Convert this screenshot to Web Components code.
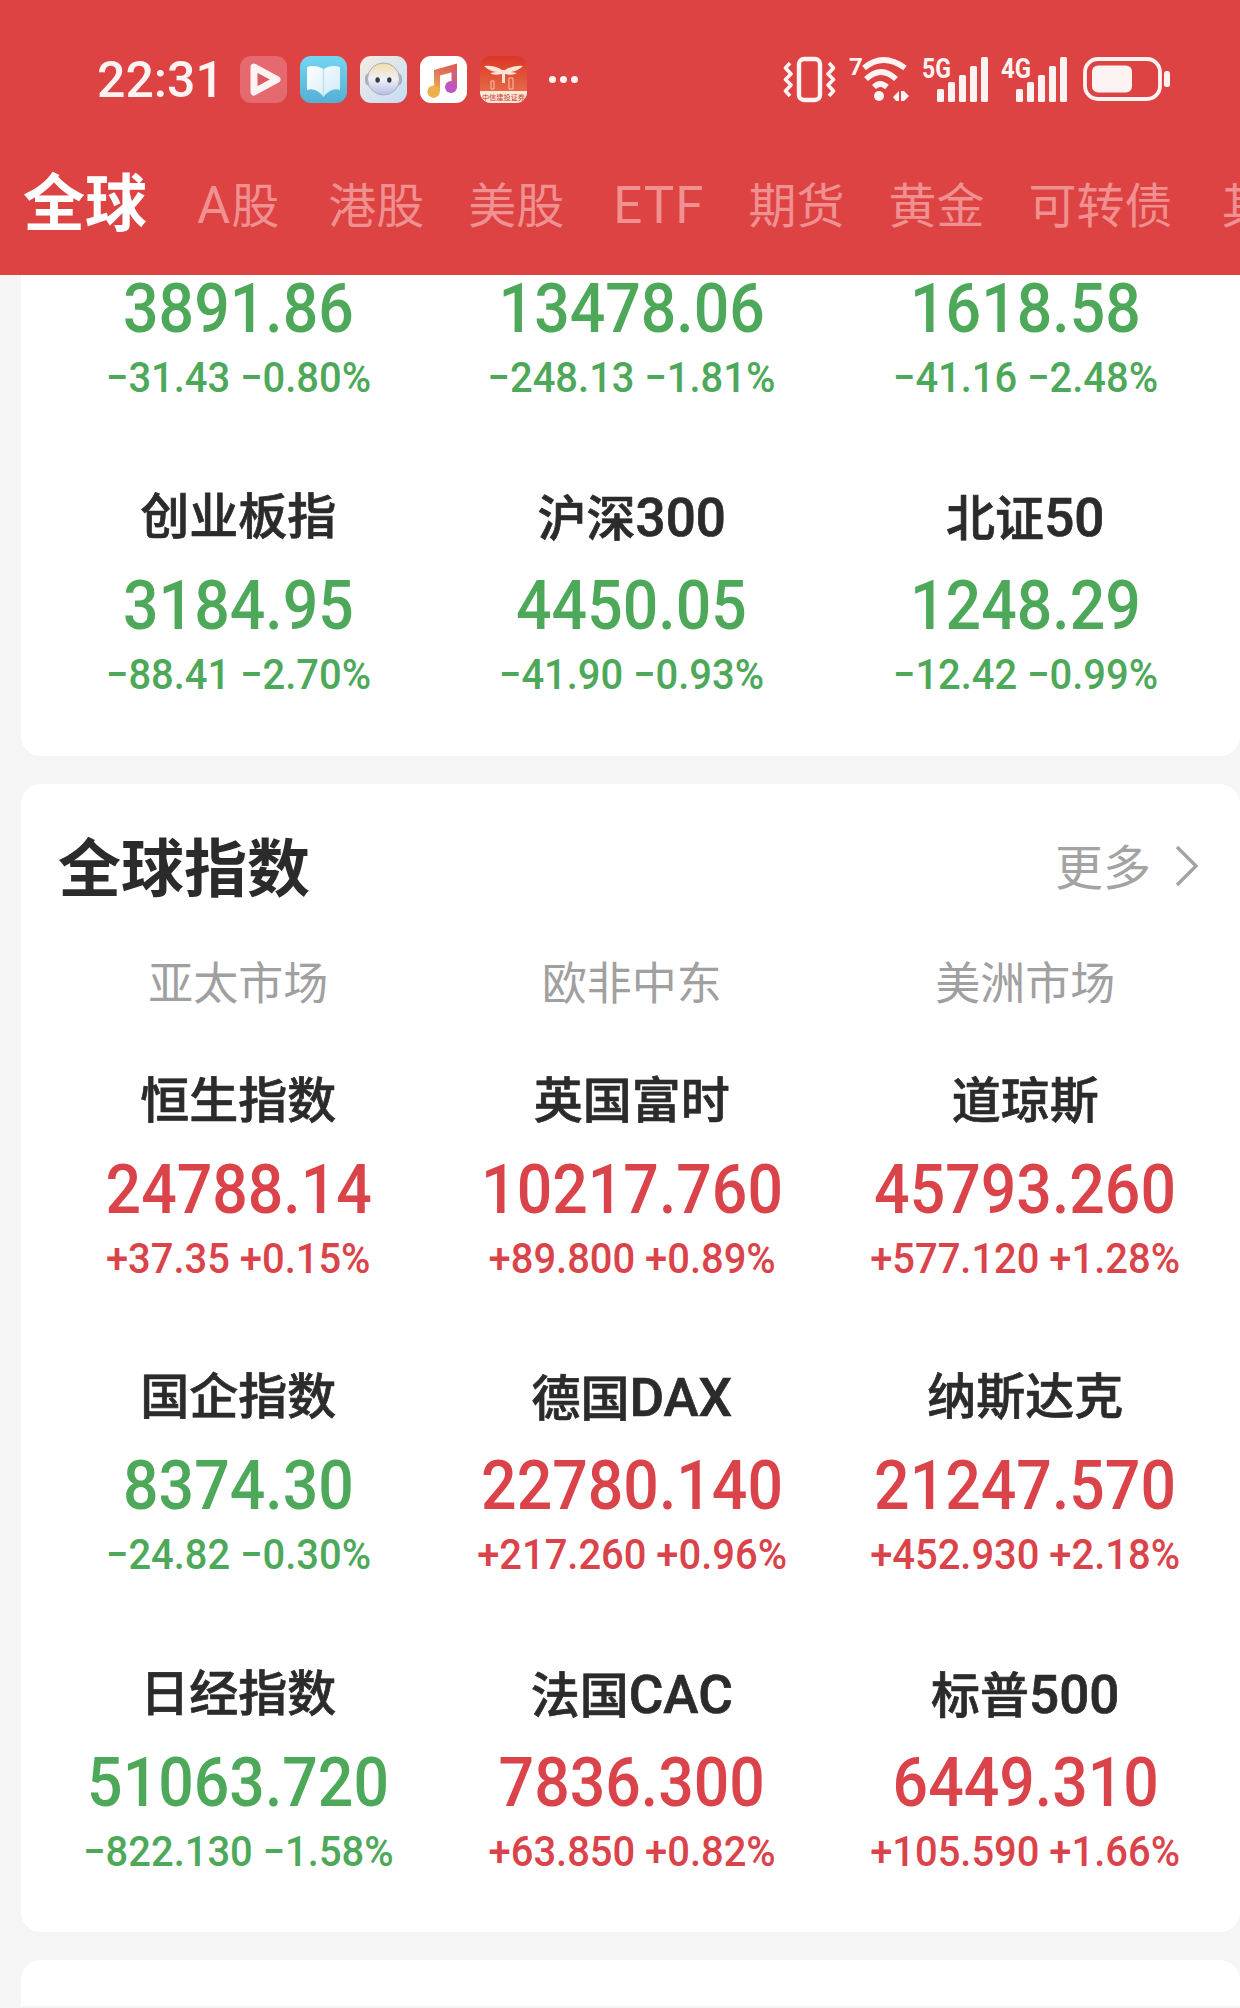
<!DOCTYPE html>
<html lang="zh">
<head>
<meta charset="utf-8">
<style>
  html, body { margin: 0; height: 100%; overflow: hidden; background: #f5f5f5; }
  body { display: flex; flex-direction: column; font-family: Roboto, "Noto Sans CJK SC", sans-serif; }
  .scroller { flex: 1; min-height: 0; display: flex; flex-direction: column; gap: 28px; padding-left: 21px; }
</style>
</head>
<body>
<app-header></app-header>
<div class="scroller">
  <index-card id="domestic" class="first"></index-card>
  <index-card id="global" heading="全球指数" more="更多" labels="亚太市场,欧非中东,美洲市场"></index-card>
  <index-card id="next" class="stub"></index-card>
</div>

<script>
/**
 * Red header: status bar + market tabs
 */
class StatusBar extends HTMLElement {
  constructor() {
    super();
    this.attachShadow({ mode: 'open' });
  }

  connectedCallback() {
    this.shadowRoot.innerHTML = `
      <style>
        :host { display: flex; align-items: center; height: 158px; padding-left: 97px; color: #fdf3f3; box-sizing: border-box; }
        .time { width: 143px; font: 500 50px Roboto, sans-serif; margin-top: 2px; }
        .apps { display: flex; align-items: center; gap: 13px; }
        .apps svg { display: block; width: 47px; height: 47px; }
        .dots { display: flex; gap: 4px; margin-left: 22px; }
        .dots i { width: 7px; height: 7px; border-radius: 50%; background: #fdf3f3; }
        .sys { display: block; position: absolute; left: 783px; top: 44px; width: 390px; height: 60px; }
        .sys text { font: 700 28px Roboto, sans-serif; fill: #fdf3f3; }
      </style>
      <div class="time">22:31</div>
      <div class="apps">
        <svg viewBox="0 0 47 47">
          <rect width="47" height="47" rx="11" fill="#e5696f"/>
          <path d="M14 11 L37 23.5 L14 36 Z" fill="#db5a63" stroke="#fdf3f3" stroke-width="7" stroke-linejoin="round"/>
        </svg>
        <svg viewBox="0 0 47 47">
          <defs>
            <linearGradient id="bk" x1="0" y1="0" x2="0" y2="1"><stop offset="0" stop-color="#74d6f2"/><stop offset="1" stop-color="#54b0d4"/></linearGradient>
            <linearGradient id="pg" x1="0" y1="0" x2="1" y2="1"><stop offset="0" stop-color="#ffffff"/><stop offset="1" stop-color="#cfeaf7"/></linearGradient>
          </defs>
          <rect width="47" height="47" rx="11" fill="url(#bk)"/>
          <path d="M7 11 Q16 8 23.5 13 Q31 8 40 11 V34 Q31 31 23.5 41 Q16 31 7 34 Z" fill="url(#pg)"/>
          <path d="M23.5 13 V40" stroke="#b9e2f3" stroke-width="1.5"/>
        </svg>
        <svg viewBox="0 0 47 47">
          <defs>
            <linearGradient id="rb" x1="0" y1="0" x2="1" y2="1"><stop offset="0" stop-color="#f5ece3"/><stop offset="1" stop-color="#c4dcf7"/></linearGradient>
            <linearGradient id="hd" x1="0" y1="0" x2="0" y2="1"><stop offset="0" stop-color="#f3dca6"/><stop offset=".5" stop-color="#eef1f8"/><stop offset="1" stop-color="#b8bce6"/></linearGradient>
          </defs>
          <rect width="47" height="47" rx="11" fill="url(#rb)"/>
          <rect x="5" y="17" width="37" height="13" rx="5" fill="#a9aeb8"/>
          <circle cx="23.5" cy="23" r="16" fill="url(#hd)" stroke="#a9aeb8" stroke-width="1"/>
          <ellipse cx="17.6" cy="24" rx="2.2" ry="2.8" fill="#333a4a"/>
          <ellipse cx="29.3" cy="24" rx="2.2" ry="2.8" fill="#333a4a"/>
        </svg>
        <svg viewBox="0 0 47 47">
          <defs>
            <linearGradient id="nt" x1=".6" y1="0" x2=".2" y2="1"><stop offset="0" stop-color="#df5f52"/><stop offset=".45" stop-color="#e2785a"/><stop offset="1" stop-color="#eeb04e"/></linearGradient>
          </defs>
          <rect width="47" height="47" rx="11" fill="#fff"/>
          <path d="M14 14 L37 7.5 V15 L20 19.5 V36 H14 Z" fill="url(#nt)"/>
          <circle cx="13.6" cy="35.7" r="6.2" fill="#eeb04e"/>
          <path d="M31.5 14 H37 V31 H31.5 Z" fill="#d0607f"/>
          <circle cx="31" cy="31" r="6" fill="#bf55bd"/>
        </svg>
        <svg viewBox="0 0 47 47">
          <defs>
            <linearGradient id="cx" x1="0" y1="0" x2="0" y2="1"><stop offset="0" stop-color="#dc3527"/><stop offset="1" stop-color="#ea7a52"/></linearGradient>
            <clipPath id="cr"><rect width="47" height="47" rx="11"/></clipPath>
          </defs>
          <g clip-path="url(#cr)">
            <rect width="47" height="47" fill="url(#cx)"/>
            <path d="M4 10 Q14 9 22 14 L22 18 Q14 20 10 17 L16 16 Q9 15 4 10 Z M43 10 Q33 9 25 14 L25 18 Q33 20 37 17 L31 16 Q38 15 43 10 Z" fill="#fbe4d6"/>
            <path d="M22 14 H25 V27 H22 Z" fill="#fbe4d6"/>
            <path d="M11 25 h3 v8 h-3z M29 22 h4 v11 h-4z" fill="none" stroke="#f7c5a8" stroke-width="1"/>
            <rect x="0" y="35" width="47" height="12" fill="#fbe9d8"/>
            <text x="23.5" y="44" text-anchor="middle" font-size="7.2" fill="#c9392a" font-family="'Noto Sans CJK SC', sans-serif">中信建投证券</text>
          </g>
        </svg>
      </div>
      <div class="dots"><i></i><i></i><i></i></div>
      <svg class="sys" viewBox="0 -10 390 60" fill="none">
        <!-- vibrate -->
        <rect x="16" y="5" width="21" height="41" rx="5" stroke="#fdf3f3" stroke-width="4.4"/>
        <path d="M7 9 L2.5 14 L8 20 L2.5 25.5 L8 31 L2.5 37 L7 42 M46 9 L50.5 14 L45 20 L50.5 25.5 L45 31 L50.5 37 L46 42" stroke="#fdf3f3" stroke-width="3.6" stroke-linejoin="round"/>
        <!-- wifi 7 -->
        <text x="66" y="21" style="font-size:24px">7</text>
        <path d="M81 14 Q100 -2 122 14 M83 25 Q98 11 113 25 M91 33 Q97 27 104 33" stroke="#fdf3f3" stroke-width="5.6"/>
        <circle cx="96" cy="42" r="5" fill="#fdf3f3"/>
        <path d="M113 47 h3 v-10 l-6 6z M118 37 h3 l5 5 -5 5 h-3z" fill="#fdf3f3"/>
        <!-- 5G -->
        <text x="139" y="24" textLength="29" lengthAdjust="spacingAndGlyphs">5G</text>
        <g fill="#fdf3f3">
          <rect x="154" y="35" width="7" height="13" rx="1.5"/>
          <rect x="165" y="28" width="7" height="20" rx="1.5"/>
          <rect x="176" y="21" width="7" height="27" rx="1.5"/>
          <rect x="187" y="12" width="7" height="36" rx="1.5"/>
          <rect x="198" y="3" width="7" height="45" rx="1.5"/>
        </g>
        <!-- 4G -->
        <text x="218" y="24" textLength="30" lengthAdjust="spacingAndGlyphs">4G</text>
        <g fill="#fdf3f3">
          <rect x="233" y="35" width="7" height="13" rx="1.5"/>
          <rect x="244" y="28" width="7" height="20" rx="1.5"/>
          <rect x="255" y="21" width="7" height="27" rx="1.5"/>
          <rect x="266" y="12" width="7" height="36" rx="1.5"/>
          <rect x="277" y="3" width="7" height="45" rx="1.5"/>
        </g>
        <!-- battery -->
        <rect x="302" y="5" width="75" height="40" rx="13" stroke="#fdf3f3" stroke-width="3.8"/>
        <rect x="309" y="11.5" width="40" height="27" rx="6" fill="#fdf3f3"/>
        <rect x="381" y="17" width="6" height="16" rx="2.5" fill="#fdf3f3"/>
      </svg>
    `;
  }
}

class TabStrip extends HTMLElement {
  constructor() {
    super();
    this.attachShadow({ mode: 'open' });
  }

  connectedCallback() {
    const tabs = (this.getAttribute('tabs') || '').split(',');
    const wide = (this.getAttribute('wide') || '').split(',');
    // latin letters run wider than the CJK ones in the app font
    const mark = t => t.replace(/[A-Za-z]+/g, m => `<span class="lat">${m}</span>`);
    this.shadowRoot.innerHTML = `
      <style>
        :host { display: flex; align-items: center; height: 117px; padding: 0 0 20px 23px; box-sizing: border-box; overflow: hidden; white-space: nowrap; font-family: Roboto, "Noto Sans CJK SC", sans-serif; }
        .tab { flex: none; font-size: 48px; color: #f09090; margin-right: 44px; line-height: 60px; }
        .tab.on { font-size: 62px; font-weight: 700; color: #fff; margin-right: 50px; margin-top: -4px; }
        .tab.wide { margin-right: 49px; }
        .lat { font-size: 51px; letter-spacing: 1px; }
      </style>
      ${tabs.map((t, i) => `<span class="tab ${i === 0 ? 'on' : ''} ${wide.includes(t) ? 'wide' : ''}">${mark(t)}</span>`).join('')}
    `;
  }
}

class AppHeader extends HTMLElement {
  constructor() {
    super();
    this.attachShadow({ mode: 'open' });
  }

  connectedCallback() {
    this.shadowRoot.innerHTML = `
      <style>
        :host { display: block; flex: none; height: 275px; background: #dd4342; position: relative; z-index: 1; }
      </style>
      <status-bar></status-bar>
      <tab-strip tabs="全球,A股,港股,美股,ETF,期货,黄金,可转债,其他" wide="A股,美股,可转债"></tab-strip>
    `;
  }
}

/**
 * One quote: name, big value, change line
 */
class QuoteCell extends HTMLElement {
  constructor() {
    super();
    this.attachShadow({ mode: 'open' });
  }

  connectedCallback() {
    const name = this.getAttribute('name');
    const up = (this.getAttribute('change') || '').startsWith('+');
    const label = name ? name.replace(/[A-Za-z0-9]+/g, m => `<span class="lat">${m}</span>`) : '';
    this.shadowRoot.innerHTML = `
      <style>
        :host { display: flex; flex-direction: column; align-items: center; white-space: nowrap; }
        .name { height: 60px; line-height: 60px; margin-bottom: 29px; font-size: 49px; font-weight: 500; color: #2b2b2b; -webkit-text-stroke: .7px #2b2b2b; font-family: Roboto, "Noto Sans CJK SC", sans-serif; }
        .lat { font-size: 53px; }
        .value { height: 58px; line-height: 58px; margin-bottom: 20px; font-size: 68px; font-weight: 500; transform: scaleX(.92); }
        .change { height: 40px; line-height: 40px; font-size: 42px; font-weight: 500; transform: scaleX(.95); }
        .up { color: #da434a; }
        .down { color: #4ea85a; }
      </style>
      ${name ? `<div class="name">${label}</div>` : ''}
      <div class="value ${up ? 'up' : 'down'}">${this.getAttribute('value')}</div>
      <div class="change ${up ? 'up' : 'down'}">${this.getAttribute('change')}</div>
    `;
  }
}

/**
 * White rounded card with an optional title row and market labels
 */
class IndexCard extends HTMLElement {
  constructor() {
    super();
    this.attachShadow({ mode: 'open' });
  }

  connectedCallback() {
    const heading = this.getAttribute('heading');
    const labels = this.getAttribute('labels');
    const cols = labels ? labels.split(',') : [];
    this.shadowRoot.innerHTML = `
      <style>
        :host { display: block; flex: none; background: #fff; border-radius: 20px; font-family: Roboto, "Noto Sans CJK SC", sans-serif; }
        :host(.first) { border-radius: 0 0 20px 20px; padding: 5px 0 61px; }
        :host(.stub) { height: 46px; border-radius: 20px 20px 0 0; }
        .title { display: flex; align-items: center; height: 80px; padding: 40px 40px 0 37px; }
        h2 { flex: 1; margin: 0; font-size: 63px; font-weight: 700; color: #2b2b2b; }
        .more { font-size: 48px; color: #a3a3a3; margin-right: 23px; }
        .more + svg { display: block; width: 26px; height: 42px; margin-top: 4px; }
        .labels { display: grid; grid-template-columns: repeat(3, 393.5px); padding-left: 20.5px; margin: 56px 0 62px; }
        .labels span { text-align: center; height: 50px; line-height: 50px; font-size: 45px; color: #a0a0a0; }
        .grid { display: grid; grid-template-columns: repeat(3, 393.5px); row-gap: 89.5px; padding-left: 20.5px; padding-bottom: 60px; }
        :host(.first) .grid { padding-bottom: 0; }
        :host(.stub) .grid { display: none; }
      </style>
      ${heading ? `
        <div class="title">
          <h2>${heading}</h2>
          <span class="more">${this.getAttribute('more')}</span>
          <svg viewBox="0 0 26 42" fill="none"><path d="M3 2 L22 21 L3 40" stroke="#a3a3a3" stroke-width="3.4"/></svg>
        </div>` : ''}
      ${cols.length ? `<div class="labels">${cols.map(c => `<span>${c}</span>`).join('')}</div>` : ''}
      <div class="grid"><slot></slot></div>
    `;
  }

  setQuotes(quotes) {
    this.innerHTML = '';
    quotes.forEach(([name, value, change]) => {
      const cell = document.createElement('quote-cell');
      if (name) cell.setAttribute('name', name);
      cell.setAttribute('value', value);
      cell.setAttribute('change', change);
      this.appendChild(cell);
    });
  }
}

customElements.define('status-bar', StatusBar);
customElements.define('tab-strip', TabStrip);
customElements.define('app-header', AppHeader);
customElements.define('quote-cell', QuoteCell);
customElements.define('index-card', IndexCard);

document.getElementById('domestic').setQuotes([
  ['', '3891.86', '−31.43 −0.80%'],
  ['', '13478.06', '−248.13 −1.81%'],
  ['', '1618.58', '−41.16 −2.48%'],
  ['创业板指', '3184.95', '−88.41 −2.70%'],
  ['沪深300', '4450.05', '−41.90 −0.93%'],
  ['北证50', '1248.29', '−12.42 −0.99%'],
]);

document.getElementById('global').setQuotes([
  ['恒生指数', '24788.14', '+37.35 +0.15%'],
  ['英国富时', '10217.760', '+89.800 +0.89%'],
  ['道琼斯', '45793.260', '+577.120 +1.28%'],
  ['国企指数', '8374.30', '−24.82 −0.30%'],
  ['德国DAX', '22780.140', '+217.260 +0.96%'],
  ['纳斯达克', '21247.570', '+452.930 +2.18%'],
  ['日经指数', '51063.720', '−822.130 −1.58%'],
  ['法国CAC', '7836.300', '+63.850 +0.82%'],
  ['标普500', '6449.310', '+105.590 +1.66%'],
]);
</script>
</body>
</html>
